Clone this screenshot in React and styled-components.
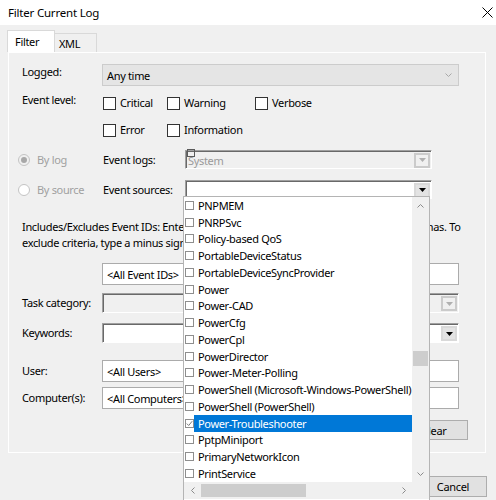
import React from "react";
import styled, { createGlobalStyle } from "styled-components";

const FONT = `"Noto Sans", "Segoe UI", sans-serif`;

const GlobalStyle = createGlobalStyle`
  html, body { margin: 0; padding: 0; background: #f0f0f0; }
  body { font-family: ${FONT}; font-size: 11px; letter-spacing: -0.33px; color: #000; }
  *, *::before, *::after { box-sizing: border-box; }
`;

const Window = styled.div`
  position: relative;
  width: 496px;
  height: 500px;
  overflow: hidden;
  background: #f0f0f0;
`;

const TitleBar = styled.div`
  height: 25px;
  background: #fff;
  display: flex;
  align-items: center;
  justify-content: space-between;
  padding: 0 3px 0 8px;
`;

const Title = styled.span`
  line-height: 16px;
  font-size: 11.5px;
  letter-spacing: -0.2px;
`;

const Body = styled.div`
  padding-left: 8px;
`;

const TabStrip = styled.div`
  display: flex;
  align-items: flex-end;
  height: 27px;
`;

const Tab = styled.div`
  height: ${(p) => (p.$active ? 22 : 19)}px;
  width: ${(p) => p.$w}px;
  padding-left: ${(p) => p.$pl}px;
  margin-left: ${(p) => (p.$active ? -1 : 0)}px;
  display: flex;
  align-items: center;
  background: ${(p) => (p.$active ? "#fff" : "#f0f0f0")};
  border: 1px solid #d9d9d9;
  border-bottom: none;
  ${(p) => (!p.$active ? "border-left: none;" : "")}
`;

const Panel = styled.div`
  width: 478px;
  height: 401px;
  border: 1px solid #fff;
  display: flex;
  flex-direction: column;
  padding-left: 13px;
`;

const Row = styled.div`
  display: flex;
  flex: none;
  align-items: ${(p) => p.$align || "center"};
  justify-content: ${(p) => p.$justify || "flex-start"};
  height: ${(p) => p.$h}px;
  margin-top: ${(p) => p.$mt}px;
  margin-left: ${(p) => p.$ml || 0}px;
  padding-right: ${(p) => p.$pr || 0}px;
`;

const FieldLabel = styled.div`
  width: ${(p) => p.$w || 80}px;
  flex: none;
  line-height: 16px;
  white-space: nowrap;
`;

const FlatSelect = styled.div`
  width: 357px;
  height: 100%;
  display: flex;
  align-items: center;
  justify-content: space-between;
  padding: 0 6px 0 4px;
  background: #e5e5e5;
  border: 1px solid #cccccc;
`;

const CheckGrid = styled.div`
  display: grid;
  grid-template-columns: 64px 88px auto;
  grid-auto-rows: 16px;
  row-gap: 11px;
  padding-top: 3px;
  margin-left: 1px;
`;

const CheckItem = styled.div`
  display: flex;
  align-items: center;
  gap: 4px;
  line-height: 16px;
  white-space: nowrap;
`;

const CheckBoxSquare = styled.span`
  width: 13px;
  height: 13px;
  flex: none;
  background: #fff;
  border: 1px solid #333;
`;

const RadioItem = styled.div`
  width: 85px;
  flex: none;
  display: flex;
  align-items: center;
  gap: 7px;
  color: #a0a0a0;
  line-height: 16px;
`;

const RadioCircle = styled.span`
  width: 12px;
  height: 12px;
  flex: none;
  border-radius: 50%;
  border: 1px solid #c4c4c4;
  background: ${(p) => (p.$checked ? "#f0f0f0" : "#fff")};
  display: flex;
  align-items: center;
  justify-content: center;
  &::after {
    content: "";
    display: ${(p) => (p.$checked ? "block" : "none")};
    width: 6px;
    height: 6px;
    border-radius: 50%;
    background: #a8a8a8;
  }
`;

const Combo = styled.div`
  position: relative;
  width: ${(p) => p.$w}px;
  height: 100%;
  display: flex;
  align-items: center;
  justify-content: space-between;
  background: ${(p) => (p.$disabled ? "#f0f0f0" : "#fff")};
  border-style: solid;
  border-width: 1px;
  border-color: #a0a0a0 #fff #fff #a0a0a0;
  box-shadow: inset 1px 1px 0 #696969;
  padding: 1px 1px 0 2px;
  color: ${(p) => (p.$disabled ? "#9a9a9a" : "#000")};
`;

const FocusMark = styled.span`
  position: absolute;
  left: 1px;
  top: -2px;
  width: 8px;
  height: 8px;
  border: 1px solid #5a5a5a;
`;

const DropBtn = styled.span`
  width: 16px;
  height: 15px;
  flex: none;
  display: flex;
  align-items: center;
  justify-content: center;
  background: ${(p) => (p.$disabled ? "#f0f0f0" : "#e3e3e3")};
  border: 2px solid ${(p) => (p.$disabled ? "#cbcbcb" : "#d9d9d9")};
`;

const Description = styled.p`
  margin: 20px 0 0;
  line-height: 16px;
  white-space: nowrap;
  flex: none;
`;

const TextBox = styled.div`
  width: 357px;
  height: 100%;
  display: flex;
  align-items: center;
  padding-left: 4px;
  background: #fff;
  border: 1px solid #ababab;
  white-space: nowrap;
  overflow: hidden;
`;

const Button = styled.button`
  width: ${(p) => p.$w || 68}px;
  height: 100%;
  padding: 0;
  background: #e1e1e1;
  border: 1px solid #adadad;
  font: inherit;
  letter-spacing: inherit;
  color: #000;
`;

const Footer = styled.div`
  display: flex;
  justify-content: flex-end;
  gap: 7px;
  height: 21px;
  margin-top: 23px;
  padding-right: 9px;
`;

/* ---------- drop-down list overlay ---------- */

const DropList = styled.div`
  position: absolute;
  left: -3px;
  top: 15px;
  width: 247px;
  height: 310px;
  z-index: 5;
  display: grid;
  grid-template-columns: 228px 17px;
  grid-template-rows: 285px 17px;
  background: #fff;
  border: 1px solid #b4b4b4;
  color: #000;
`;

const Items = styled.div`
  display: flex;
  flex-direction: column;
  overflow: hidden;
`;

const ListItem = styled.div`
  height: 16.75px;
  flex: none;
  display: flex;
  align-items: center;
  padding-left: 1px;
`;

const SmallBox = styled.span`
  width: 9px;
  height: 9px;
  flex: none;
  border: 1px solid #8e8e8e;
  background: #fff;
  display: flex;
  align-items: center;
  justify-content: center;
`;

const ItemText = styled.span`
  flex: 1;
  align-self: stretch;
  display: flex;
  align-items: center;
  padding-left: 4px;
  white-space: nowrap;
  background: ${(p) => (p.$selected ? "#0078d7" : "transparent")};
  color: ${(p) => (p.$selected ? "#fff" : "#000")};
`;

const VScroll = styled.div`
  display: flex;
  flex-direction: column;
  background: #f0f0f0;
`;

const ScrollArrow = styled.div`
  width: 17px;
  height: 17px;
  flex: none;
  display: flex;
  align-items: center;
  justify-content: center;
`;

const VTrack = styled.div`
  flex: 1;
  display: flex;
  flex-direction: column;
`;

const VThumb = styled.div`
  height: 15px;
  margin: 137px 1px 0;
  background: #cdcdcd;
`;

const HScroll = styled.div`
  display: flex;
  align-items: stretch;
  background: #f0f0f0;
`;

const HThumb = styled.div`
  width: 105px;
  margin: 2px 0;
  background: #cdcdcd;
`;

const HSpacer = styled.div`
  flex: 1;
`;

const Corner = styled.div`
  background: #f0f0f0;
`;

/* ---------- icons ---------- */

const CloseIcon = () => (
  <svg width="11" height="11" viewBox="0 0 11 11">
    <path d="M0.5 0.5 L10.5 10.5 M10.5 0.5 L0.5 10.5" stroke="#000" strokeWidth="1" fill="none" />
  </svg>
);

const Chevron = ({ dir = "down", color = "#9a9a9a" }) => {
  const d = {
    down: "M0.5 0.5 L3.5 3.5 L6.5 0.5",
    up: "M0.5 3.5 L3.5 0.5 L6.5 3.5",
    left: "M3.5 0.5 L0.5 3.5 L3.5 6.5",
    right: "M0.5 0.5 L3.5 3.5 L0.5 6.5",
  }[dir];
  const horiz = dir === "left" || dir === "right";
  return (
    <svg width={horiz ? 4 : 7} height={horiz ? 7 : 4} viewBox={horiz ? "0 0 4 7" : "0 0 7 4"}>
      <path d={d} stroke={color} strokeWidth="1" fill="none" />
    </svg>
  );
};

const Triangle = ({ color }) => (
  <svg width="7" height="4" viewBox="0 0 7 4">
    <polygon points="0,0 7,0 3.5,4" fill={color} />
  </svg>
);

const CheckMark = () => (
  <svg width="7" height="7" viewBox="0 0 7 7">
    <path d="M0.8 3.6 L2.7 5.5 L6.2 1.2" stroke="#7a7a7a" strokeWidth="1" fill="none" />
  </svg>
);

const Check = ({ children }) => (
  <CheckItem>
    <CheckBoxSquare />
    <span>{children}</span>
  </CheckItem>
);

const SOURCES = [
  "PNPMEM",
  "PNRPSvc",
  "Policy-based QoS",
  "PortableDeviceStatus",
  "PortableDeviceSyncProvider",
  "Power",
  "Power-CAD",
  "PowerCfg",
  "PowerCpl",
  "PowerDirector",
  "Power-Meter-Polling",
  "PowerShell (Microsoft-Windows-PowerShell)",
  "PowerShell (PowerShell)",
  "Power-Troubleshooter",
  "PptpMiniport",
  "PrimaryNetworkIcon",
  "PrintService",
];

export default function App() {
  return (
    <>
      <GlobalStyle />
      <Window>
        <TitleBar>
          <Title>Filter Current Log</Title>
          <CloseIcon />
        </TitleBar>
        <Body>
          <TabStrip>
            <Tab $active $w={48} $pl={7}>Filter</Tab>
            <Tab $w={42} $pl={4}>XML</Tab>
          </TabStrip>
          <Panel>
            <Row $mt={11} $h={22} $align="flex-start">
              <FieldLabel>Logged:</FieldLabel>
              <FlatSelect>
                <span>Any time</span>
                <Chevron dir="down" color="#a8a8a8" />
              </FlatSelect>
            </Row>

            <Row $mt={6} $h={46} $align="flex-start">
              <FieldLabel>Event level:</FieldLabel>
              <CheckGrid>
                <Check>Critical</Check>
                <Check>Warning</Check>
                <Check>Verbose</Check>
                <Check>Error</Check>
                <Check>Information</Check>
              </CheckGrid>
            </Row>

            <Row $mt={12} $h={19} $ml={-4}>
              <RadioItem>
                <RadioCircle $checked />
                <span>By log</span>
              </RadioItem>
              <FieldLabel $w={82}>Event logs:</FieldLabel>
              <Combo $w={247} $disabled>
                <FocusMark />
                <span>System</span>
                <DropBtn $disabled>
                  <Triangle color="#b0b0b0" />
                </DropBtn>
              </Combo>
            </Row>

            <Row $mt={11} $h={19} $ml={-4}>
              <RadioItem>
                <RadioCircle />
                <span>By source</span>
              </RadioItem>
              <FieldLabel $w={82}>Event sources:</FieldLabel>
              <Combo $w={247}>
                <span />
                <DropBtn>
                  <Triangle color="#000" />
                </DropBtn>
                <DropList>
                  <Items>
                    {SOURCES.map((s, i) => (
                      <ListItem key={s}>
                        <SmallBox>{i === 13 && <CheckMark />}</SmallBox>
                        <ItemText $selected={i === 13}>{s}</ItemText>
                      </ListItem>
                    ))}
                  </Items>
                  <VScroll>
                    <ScrollArrow>
                      <Chevron dir="up" color="#8a8a8a" />
                    </ScrollArrow>
                    <VTrack>
                      <VThumb />
                    </VTrack>
                    <ScrollArrow>
                      <Chevron dir="down" color="#8a8a8a" />
                    </ScrollArrow>
                  </VScroll>
                  <HScroll>
                    <ScrollArrow>
                      <Chevron dir="left" color="#8a8a8a" />
                    </ScrollArrow>
                    <HThumb />
                    <HSpacer />
                    <ScrollArrow>
                      <Chevron dir="right" color="#8a8a8a" />
                    </ScrollArrow>
                  </HScroll>
                  <Corner />
                </DropList>
              </Combo>
            </Row>

            <Description>
              Includes/Excludes Event IDs: Enter ID numbers and/or ID ranges separated by commas. To
              <br />
              exclude criteria, type a minus sign first. For example 1,3,5-99,-76
            </Description>

            <Row $mt={12} $h={22}>
              <FieldLabel />
              <TextBox>&lt;All Event IDs&gt;</TextBox>
            </Row>

            <Row $mt={8} $h={20}>
              <FieldLabel>Task category:</FieldLabel>
              <Combo $w={357} $disabled>
                <span />
                <DropBtn $disabled>
                  <Triangle color="#b0b0b0" />
                </DropBtn>
              </Combo>
            </Row>

            <Row $mt={10} $h={20}>
              <FieldLabel>Keywords:</FieldLabel>
              <Combo $w={357}>
                <span />
                <DropBtn>
                  <Triangle color="#000" />
                </DropBtn>
              </Combo>
            </Row>

            <Row $mt={17} $h={22}>
              <FieldLabel>User:</FieldLabel>
              <TextBox>&lt;All Users&gt;</TextBox>
            </Row>

            <Row $mt={5} $h={22}>
              <FieldLabel>Computer(s):</FieldLabel>
              <TextBox>&lt;All Computers&gt;</TextBox>
            </Row>

            <Row $mt={11} $h={20} $justify="flex-end" $pr={17}>
              <Button>Clear</Button>
            </Row>
          </Panel>
          <Footer>
            <Button $w={75}>OK</Button>
            <Button>Cancel</Button>
          </Footer>
        </Body>
      </Window>
    </>
  );
}
